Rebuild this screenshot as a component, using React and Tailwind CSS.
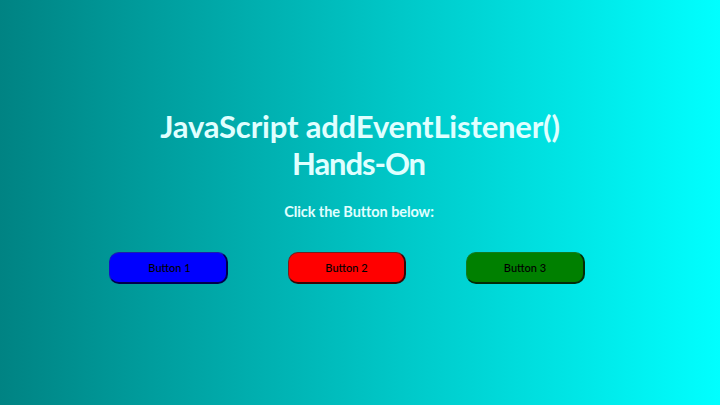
const buttons = [
  { label: 'Button 1', look: 'pl-[3px] bg-[#0000ff] border-t-[#1c22a8] border-l-[#1210c8] border-r-[#00004c] border-b-[#00004c]' },
  { label: 'Button 2', look: 'bg-[#ff0000] border-t-[#74201f] border-l-[#74201f] border-r-[#380606] border-b-[#380606]' },
  { label: 'Button 3', look: 'bg-[#008000] border-t-[#127a20] border-l-[#127a20] border-r-[#042c08] border-b-[#042c08]' },
];

export default function App() {
  return (
    <main className="flex h-[405px] w-[720px] flex-col items-center overflow-hidden bg-linear-[90deg,#008383,#00ffff] pt-[108px] font-['Lato',sans-serif]">
      <h1 className="text-center text-[31px] leading-[37px] font-bold whitespace-nowrap text-[#e0ffff]">
        <span className="block tracking-[-0.18px]">JavaScript addEventListener()</span>
        <span className="mr-[3px] block tracking-[-1.1px]">Hands-On</span>
      </h1>
      <p className="mt-[20px] mr-[2px] text-[14.5px] leading-[20px] font-bold tracking-[-0.08px] whitespace-nowrap text-[#e0ffff]">
        Click the Button below:
      </p>
      <div className="mt-[30px] mr-[26px] flex gap-[60px]">
        {buttons.map(({ label, look }) => (
          <button
            key={label}
            className={`h-[32px] w-[118.5px] rounded-[10px] border-t border-r-2 border-b-2 border-l pb-px text-[11px] leading-none font-medium text-black ${look}`}
          >
            {label}
          </button>
        ))}
      </div>
    </main>
  );
}
